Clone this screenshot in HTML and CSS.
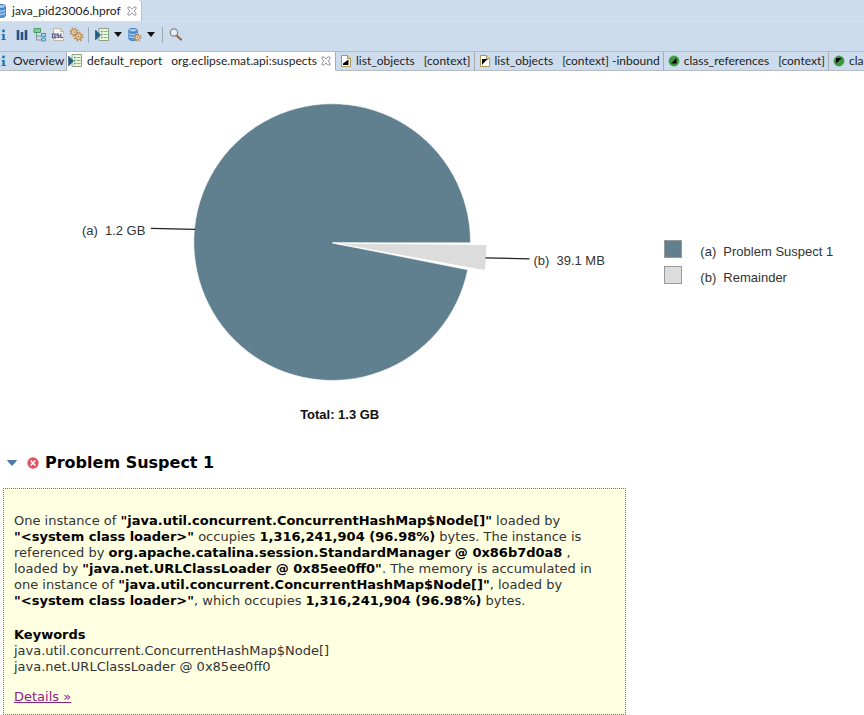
FILE: index.html
```html
<!DOCTYPE html>
<html lang="en">
<head>
<meta charset="utf-8">
<title>java_pid23006.hprof</title>
<link rel="stylesheet" href="styles.css">
</head>
<body>
<svg class="defs" aria-hidden="true">
  <symbol id="info" viewBox="0 0 8 16"><circle cx="3.500" cy="4" r="1.400" fill="#1b6fae"/><path d="M1.500 7h3.200v5.200H6V13H1.300v-.8h1.200V7.800h-1z" fill="#1b6fae"/></symbol>
  <symbol id="close" viewBox="0 0 10 10"><path d="M1 1h2l2 2 2-2h2v2L7 5l2 2v2H7L5 7 3 9H1V7l2-2-2-2z" fill="#fff" stroke="#8b9096" stroke-width=".9"/></symbol>
  <symbol id="report" viewBox="0 0 16 16"><path d="M5 1.500h9.500v12H5z" fill="#f1f5dc" stroke="#8ba084"/><path d="M7 4.500h1.500M7 7.500h1.500M7 10.500h1.500" stroke="#3f9a68" stroke-width="1.400"/><path d="M9.500 4.500h4M9.500 7.500h4M9.500 10.500h4" stroke="#7fb590"/><path d="M1.500 3v10L6.500 8z" fill="#225e8a" stroke="#174b77" stroke-width=".6"/></symbol>
  <symbol id="doc-out" viewBox="0 0 12 16"><path d="M1.500 2.500h6l3 3v8h-9z" fill="#fff" stroke="#ad9651"/><path d="M7.500 2.500v3h3" fill="#eadba9" stroke="#ad9651"/><path d="M3 12V10.500l5.500-4V12z" fill="#000"/></symbol>
  <symbol id="doc-in" viewBox="0 0 12 16"><path d="M1.500 2.500h6l3 3v8h-9z" fill="#fff" stroke="#ad9651"/><path d="M7.500 2.500v3h3" fill="#eadba9" stroke="#ad9651"/><path d="M3 6h6L6.500 8 3 12z" fill="#000"/></symbol>
  <symbol id="class-out" viewBox="0 0 12 12"><circle cx="6" cy="6" r="5.200" fill="#39963c" stroke="#63b166" stroke-width=".6"/><path d="M3 8.500 8.500 3v5.500z" fill="#000"/></symbol>
  <symbol id="class-in" viewBox="0 0 12 12"><circle cx="6" cy="6" r="5.200" fill="#39963c" stroke="#63b166" stroke-width=".6"/><path d="M3 3h6L3 8.500z" fill="#000"/></symbol>
  <symbol id="gear" viewBox="0 0 12 12"><circle cx="6" cy="6" r="4.500" fill="none" stroke="#b98f5c" stroke-width="2" stroke-dasharray="1.800 1.730"/><circle cx="6" cy="6" r="3" fill="#f4e2c0" stroke="#bd8c50" stroke-width="1.300"/><circle cx="6" cy="6" r="1" fill="#8b6335"/></symbol>
  <symbol id="db" viewBox="0 0 10 14"><path d="M.5 2.500v9c0 2.600 9 2.600 9 0v-9" fill="#5594d5" stroke="#3877b8"/><ellipse cx="5" cy="2.500" rx="4.500" ry="2" fill="#a8d0f4" stroke="#3877b8"/><path d="M.5 5.500c0 2.400 9 2.400 9 0M.5 8.500c0 2.400 9 2.400 9 0" fill="none" stroke="#c2dff7"/></symbol>
</svg>

<header>
  <div class="files" role="tablist" aria-label="Editors">
    <button class="file" role="tab" aria-selected="true">
      <svg class="file-db"><use href="#db"/></svg>java_pid23006.hprof<svg class="close"><use href="#close"/></svg>
    </button>
  </div>

  <div class="toolbar" role="toolbar" aria-label="Heap dump tools">
    <button class="tool tool-info" aria-label="Overview"><svg class="info"><use href="#info"/></svg></button>
    <button class="tool" aria-label="Histogram"><svg viewBox="0 0 16 16"><path d="M4 3v10M8 5v8M12 3v10" stroke="#2b527d" stroke-width="2.600"/></svg></button>
    <button class="tool" aria-label="Dominator tree"><svg viewBox="0 0 16 16"><path d="M2 1.500h6.500v4H2z" fill="#8cc79c" stroke="#4a9e62"/><path d="M4.500 6v7H9M4.500 9H9" fill="none" stroke="#81939d"/><path d="M9.500 6.500h4v3h-4zM9.500 11h4v3h-4z" fill="#a9d2ea" stroke="#4e8fbd"/></svg></button>
    <button class="tool" aria-label="Query language"><svg viewBox="0 0 16 16"><path d="M3.500 1.500h7l3 3v9h-10z" fill="#f5f5f4" stroke="#beb6a4"/><path d="M10.500 1.500v3h3" fill="none" stroke="#beb6a4"/><path d="M1.500 6.500h12v5h-12z" fill="#e5e5ef"/><g fill="none" stroke="#5d5b80" stroke-width="1.200"><rect x="2.500" y="7" width="2.500" height="3.500"/><path d="M4.200 10l1.300 1.500M9 7H7v1.700h2v1.800H6.500M10.800 6.500v4H13"/></g></svg></button>
    <button class="tool" aria-label="Run expert system test"><svg viewBox="0 0 16 16"><use href="#gear" x="1" y="0" width="10" height="10"/><use href="#gear" x="5" y="4" width="11" height="11"/></svg></button>
    <span class="divider"></span>
    <button class="tool menu" aria-label="Run report"><svg viewBox="0 0 16 16"><use href="#report"/></svg><span class="arrow"></span></button>
    <button class="tool menu" aria-label="Query browser"><svg viewBox="0 0 16 16"><use href="#db" x="1" y="1" width="10" height="13"/><use href="#gear" x="6" y="6" width="9" height="9"/></svg><span class="arrow"></span></button>
    <span class="divider"></span>
    <button class="tool" aria-label="Find object"><svg viewBox="0 0 16 16"><path d="m8.500 8.500 4.500 4" stroke="#8a6a50" stroke-width="2.200" stroke-linecap="round"/><circle cx="6" cy="5.500" r="3.700" fill="#e5eff7" stroke="#8b8783" stroke-width="1.300"/></svg></button>
  </div>

  <nav class="pages" role="tablist" aria-label="Pages">
    <button class="page first" role="tab"><svg class="info"><use href="#info"/></svg><span>Overview</span></button>
    <button class="page active" role="tab" aria-selected="true"><svg class="icon"><use href="#report"/></svg><span>default_report</span><span class="arg">org.eclipse.mat.api:suspects</span><svg class="close"><use href="#close"/></svg></button>
    <button class="page" role="tab"><svg class="small"><use href="#doc-out"/></svg><span>list_objects</span><span class="arg">[context]</span></button>
    <button class="page" role="tab"><svg class="small"><use href="#doc-in"/></svg><span>list_objects</span><span class="arg">[context] -inbound</span></button>
    <button class="page" role="tab"><svg class="small"><use href="#class-out"/></svg><span>class_references</span><span class="arg">[context]</span></button>
    <button class="page last" role="tab"><svg class="small"><use href="#class-in"/></svg><span>cla</span></button>
  </nav>
</header>

<main>
  <section class="chart">
    <svg class="pie" viewBox="0 0 640 364" role="img" aria-label="Retained heap by suspect">
      <path d="M332.500 172H471A138.500 138.500 0 1 0 468.200 199Z" fill="#60808f" stroke="#fff" stroke-width=".6"/>
      <path d="M334 172.300 487.500 173.700C487.500 182.500 487 191 485.500 199.800Z" fill="#dcdcdc" stroke="#fff" stroke-width="1"/>
      <path d="M151 157.500 195.500 158.500M486 187 530 188" stroke="#222" stroke-width="1.200"/>
      <text x="82" y="164" xml:space="preserve">(a)  1.2 GB</text>
      <text x="534" y="194" xml:space="preserve">(b)  39.1 MB</text>
      <text class="total" x="340" y="348" text-anchor="middle">Total: 1.3 GB</text>
    </svg>
    <ul class="legend">
      <li><span class="swatch suspect"></span><span class="key">(a)</span><span>Problem Suspect 1</span></li>
      <li><span class="swatch"></span><span class="key">(b)</span><span>Remainder</span></li>
    </ul>
  </section>

  <section>
    <h2>
      <button class="toggle" aria-label="Collapse"><svg viewBox="0 0 10 6"><path d="M.5.500h9L5 5.500z" fill="#4679b5" stroke="#2d5b94" stroke-width=".7"/></svg></button>
      <svg class="error" viewBox="0 0 12 12" aria-hidden="true"><circle cx="6" cy="6" r="5.700" fill="#e35360"/><path d="m3.700 3.500 4.600 5M8.300 3.500l-4.600 5" stroke="#fff" stroke-width="1.600"/></svg>
      <span>Problem Suspect 1</span>
    </h2>
    <div class="details">
      <p>One instance of <b>"java.util.concurrent.ConcurrentHashMap$Node[]"</b> loaded by <b>"&lt;system class loader&gt;"</b> occupies <b>1,316,241,904 (96.98%)</b> bytes. The instance is referenced by <b>org.apache.catalina.session.StandardManager @ 0x86b7d0a8</b> , loaded by <b>"java.net.URLClassLoader @ 0x85ee0ff0"</b>. The memory is accumulated in one instance of <b>"java.util.concurrent.ConcurrentHashMap$Node[]"</b>, loaded by <b>"&lt;system class loader&gt;"</b>, which occupies <b>1,316,241,904 (96.98%)</b> bytes.</p>
      <p class="keywords"><b>Keywords</b><br>java.util.concurrent.ConcurrentHashMap$Node[]<br>java.net.URLClassLoader @ 0x85ee0ff0</p>
      <a href="#details">Details »</a>
    </div>
  </section>
</main>
</body>
</html>
```
FILE: styles.css
```css
* {
  box-sizing: border-box;
}

body {
  margin: 0;
  background: #fff;
  color: #333;
  font: 13px/16px "DejaVu Sans", Verdana, sans-serif;
  overflow-x: hidden;
}

.defs {
  position: absolute;
  width: 0;
  height: 0;
}

button {
  margin: 0;
  padding: 0;
  border: 0;
  background: none;
  color: #222;
  font: 12px/18px Lato, "Segoe UI", sans-serif;
  white-space: nowrap;
}

svg {
  flex: none;
}

header {
  background: #cddcec;
}

.files {
  display: flex;
  height: 22px;
  border-bottom: 1px solid #d6e2ef;
}

.file {
  display: flex;
  align-items: center;
  gap: 6px;
  padding-right: 4px;
  background: #fff;
  border-right: 1px solid #b4c1cf;
  border-radius: 0 4px 0 0;
}

.file-db {
  width: 10px;
  height: 14px;
  margin-left: -4px;
}

.close {
  width: 10px;
  height: 10px;
}

.toolbar {
  display: flex;
  align-items: center;
  gap: 2px;
  height: 29px;
  padding-bottom: 4px;
}

.tool {
  display: flex;
  align-items: center;
  gap: 4px;
}

.tool svg {
  width: 16px;
  height: 16px;
}

.tool-info {
  margin-right: 4px;
}

.tool .info,
.page .info {
  width: 8px;
  height: 16px;
}

.arrow {
  border: 4px solid transparent;
  border-top: 5px solid #111;
  border-bottom: 0;
}

.divider {
  width: 1px;
  height: 16px;
  margin: 0 3px 0 2px;
  background: #9da9b5;
}

.menu {
  margin-right: 3px;
}

.pages {
  display: flex;
  height: 20px;
  border-top: 1px solid #b7bcc2;
  overflow: hidden;
}

.page {
  display: flex;
  align-items: center;
  flex: none;
  gap: 4px;
  padding: 0 3px 0 4px;
  border-right: 1px solid #a9adb2;
  border-bottom: 1px solid #b7bcc2;
}

.page.first {
  gap: 5px;
  padding: 0 2px 0 0;
}

.page.active {
  padding: 0 4px 0 0;
  background: #fff;
  border-bottom-color: #fff;
}

.page.last {
  flex: 1 0 auto;
  padding-right: 0;
  border-right: 0;
}

.arg {
  margin-left: 5px;
}

.icon {
  width: 16px;
  height: 16px;
}

.small {
  width: 12px;
  height: 16px;
}

.chart {
  display: flex;
}

.pie {
  width: 74%;
  height: auto;
}

.pie text {
  fill: #333;
  font: 13px "Liberation Sans", Arial, sans-serif;
}

.pie .total {
  fill: #111;
  font-weight: bold;
}

.legend {
  flex: none;
  display: flex;
  flex-direction: column;
  gap: 2px;
  margin: 169px 0 0;
  padding: 0 0 0 25px;
  list-style: none;
  font: 13px/24px "Liberation Sans", Arial, sans-serif;
}

.legend li {
  display: flex;
  align-items: flex-start;
}

.swatch {
  width: 18px;
  height: 18px;
  margin-right: 18px;
  background: #dcdcdc;
  border: 1px solid #999;
}

.swatch.suspect {
  background: #60808f;
}

.key {
  width: 23px;
}

h2 {
  display: flex;
  align-items: center;
  gap: 6px;
  margin: 17px 0 0 7px;
  color: #000;
  font-size: 16px;
  line-height: 22px;
}

.toggle {
  display: flex;
  margin-right: 4px;
}

.toggle svg {
  width: 10px;
  height: 6px;
}

.error {
  width: 12px;
  height: 12px;
}

.details {
  max-width: 623px;
  margin: 14px 0 0 3px;
  padding: 24px 10px 9px;
  background: #ffffe1;
  border: 1px dotted #777;
}

.details p {
  margin: 0 0 18px;
}

.details .keywords {
  margin-bottom: 14px;
}

.details b {
  color: #000;
  white-space: nowrap;
}

.details a {
  color: #8b228b;
}
```
